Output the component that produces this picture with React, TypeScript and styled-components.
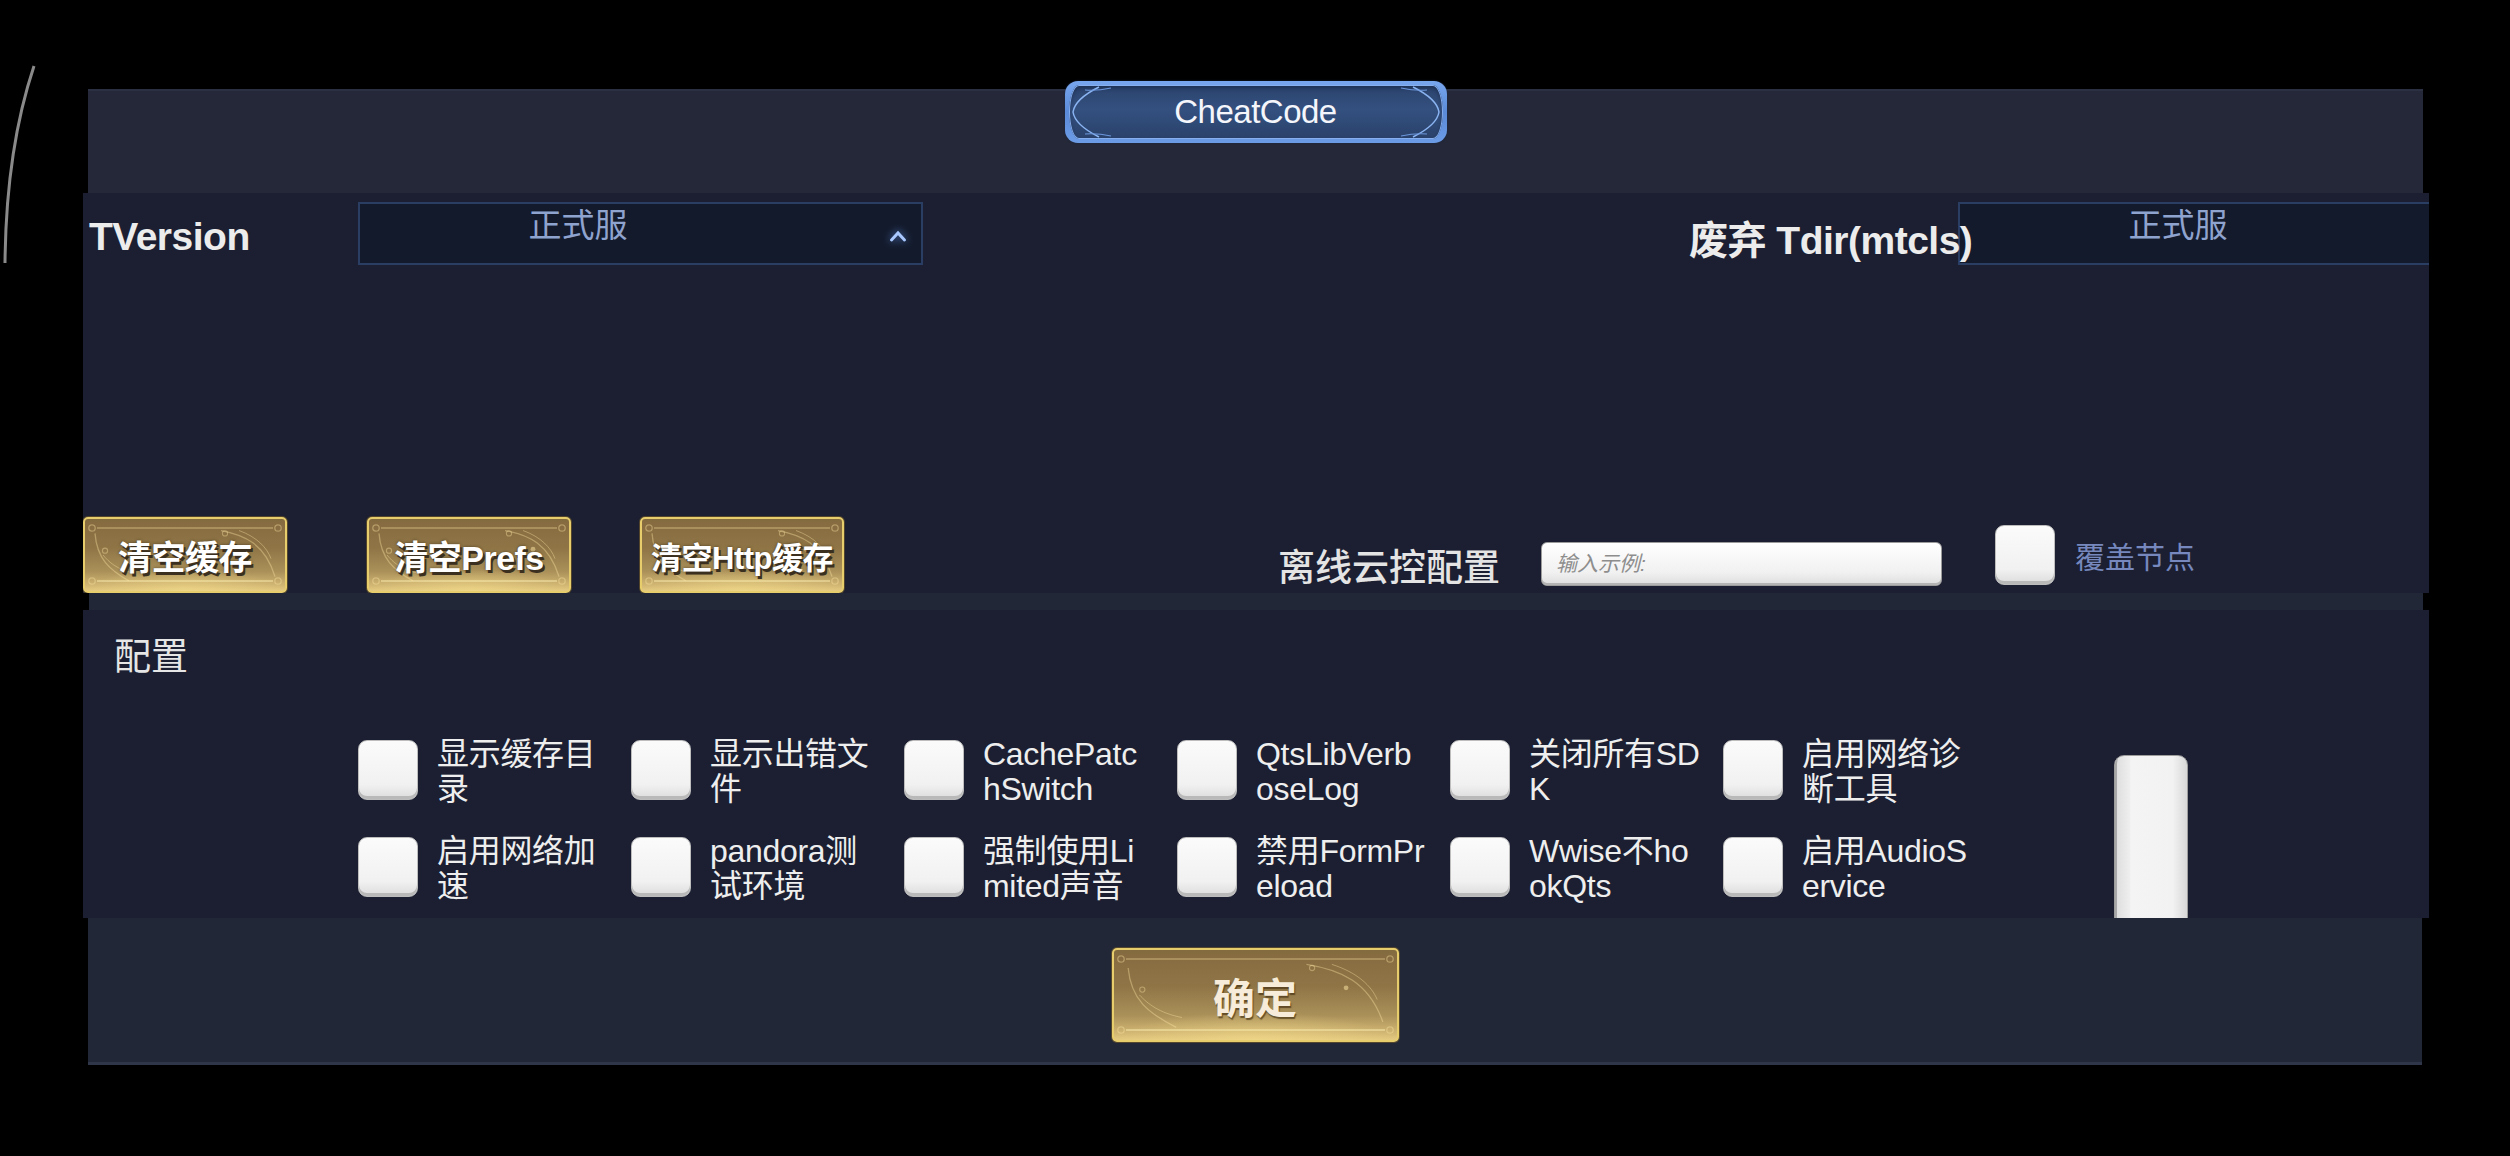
import React from "react";
import styled, { createGlobalStyle } from "styled-components";

const GlobalStyle = createGlobalStyle`
  html, body {
    margin: 0;
    padding: 0;
    background: #000;
  }
  body {
    font-family: "Liberation Sans", "Noto Sans CJK SC", sans-serif;
  }
  * {
    box-sizing: border-box;
  }
`;

const CJK = `"Liberation Sans", "Noto Sans CJK SC", sans-serif`;

const Screen = styled.div`
  position: relative;
  width: 2510px;
  height: 1156px;
  padding: 89px 0 0 83px;
  background: #000;
  overflow: hidden;
  font-family: ${CJK};
`;

const EdgeArc = styled.svg`
  position: absolute;
  left: 0;
  top: 60px;
`;

const Frame = styled.div`
  display: flex;
  flex-direction: column;
  width: 2346px;
`;

const Header = styled.div`
  display: flex;
  justify-content: center;
  align-items: flex-start;
  height: 104px;
  margin: 0 6px 0 5px;
  background: #242838;
  border-top: 2px solid #2b3042;
`;

const TitleFrame = styled.div`
  position: relative;
  width: 382px;
  height: 62px;
  margin-top: -10px;
  padding: 4px;
  border-radius: 13px;
  background: linear-gradient(180deg, #78a6ee 0%, #5b8bd8 50%, #6c9ce6 100%);
  box-shadow: 0 0 2px #1b2a48;
`;

const TitlePill = styled.div`
  position: relative;
  display: flex;
  align-items: center;
  justify-content: center;
  height: 100%;
  border-radius: 10px / 50%;
  background: linear-gradient(180deg, #2b436d 0%, #34507f 45%, #2f4a76 70%, #2a416a 100%);
  box-shadow: inset 0 0 0 1px #86aff0, inset 0 3px 4px rgba(10, 20, 45, 0.45);
  color: #f4f6fb;
  font-size: 33px;
  letter-spacing: -0.5px;
`;

const PillOrnament = styled.svg`
  position: absolute;
  inset: 0;
  pointer-events: none;
`;

const TopSection = styled.div`
  display: flex;
  flex-direction: column;
  justify-content: space-between;
  height: 400px;
  padding-top: 9px;
  background: #1b1f31;
  overflow: hidden;
`;

const SelectRow = styled.div`
  display: flex;
  align-items: center;
  height: 63px;
  padding-left: 6px;
`;

const FieldLabel = styled.div<{ $offset?: number }>`
  position: relative;
  z-index: 1;
  flex-shrink: 0;
  width: 269px;
  margin-left: ${({ $offset = 0 }) => `${$offset}px`};
  margin-top: 6px;
  color: #ececec;
  font-size: 39px;
  font-weight: 700;
  white-space: nowrap;
  letter-spacing: -0.5px;
`;

const Dropdown = styled.div`
  display: flex;
  align-items: flex-start;
  flex-shrink: 0;
  width: 565px;
  height: 63px;
  background: #131a2c;
  border: 2px solid #2a3d62;
`;

const DropText = styled.div`
  width: 436px;
  padding-top: 2px;
  text-align: center;
  color: #8fa3cf;
  font-size: 33px;
  line-height: 40px;
`;

const Chevron = styled.svg`
  align-self: center;
  margin: 4px 14px 0 auto;
  filter: drop-shadow(0 0 4px rgba(110, 160, 255, 0.8));
`;

const ActionRow = styled.div`
  display: flex;
  align-items: center;
  height: 76px;
`;

const GoldButton = styled.button<{ $w: number; $h: number; $size: number; $gap?: number }>`
  position: relative;
  display: flex;
  align-items: center;
  justify-content: center;
  flex-shrink: 0;
  width: ${({ $w }) => `${$w}px`};
  height: ${({ $h }) => `${$h}px`};
  margin: 0 0 0 ${({ $gap = 0 }) => `${$gap}px`};
  padding: 0;
  border: 2px solid #e8cd6c;
  border-radius: 5px;
  background:
    radial-gradient(ellipse 70% 45% at 50% 100%, rgba(245, 222, 140, 0.55), transparent 70%),
    linear-gradient(180deg, #846a3f 0%, #8f7546 40%, #a98f58 72%, #d1b673 92%, #e4ca80 100%);
  box-shadow: 0 0 0 1px rgba(120, 95, 40, 0.6);
  color: #ffffff;
  font-family: ${CJK};
  font-size: ${({ $size }) => `${$size}px`};
  font-weight: 700;
  text-shadow: 2px 3px 0 #3b3020, 0 0 3px rgba(40, 30, 15, 0.6);
  cursor: pointer;
`;

const ConfirmLabel = styled.span`
  position: relative;
  color: #f6ecd9;
  font-weight: 700;
  text-shadow: 1px 2px 1px rgba(70, 50, 20, 0.7);
`;

const ButtonLabel = styled.span`
  position: relative;
  letter-spacing: -0.5px;
`;

const Ornament = styled.svg`
  position: absolute;
  inset: 0;
  pointer-events: none;
`;

const OfflineLabel = styled.div`
  flex-shrink: 0;
  width: 263px;
  margin: 20px 0 0 434px;
  color: #e4e4e4;
  font-size: 37px;
  font-weight: 500;
  white-space: nowrap;
`;

const TextField = styled.input`
  flex-shrink: 0;
  width: 401px;
  height: 44px;
  margin-top: 18px;
  padding: 0 14px;
  border: 1px solid #9b9b9b;
  border-radius: 6px;
  background: linear-gradient(180deg, #ffffff 0%, #f1f1f1 70%, #dedede 100%);
  box-shadow: inset 0 -2px 0 #b4b4b4;
  font-family: ${CJK};
  font-size: 21px;
  font-style: italic;
  outline: none;

  &::placeholder {
    color: #8d8d8d;
  }
`;

const Tick = styled.div<{ $gap?: number }>`
  flex-shrink: 0;
  width: 60px;
  height: 60px;
  margin-left: ${({ $gap = 0 }) => `${$gap}px`};
  border: 1px solid #bdbdbd;
  border-radius: 9px;
  background: linear-gradient(180deg, #fbfbfb 0%, #f1f1f1 75%, #dcdcdc 100%);
  box-shadow: inset 0 -3px 0 #b9b9b9;
`;

const OverrideLabel = styled.div`
  margin: 0 0 0 20px;
  color: #7688bd;
  font-size: 30px;
  white-space: nowrap;
`;

const Strip = styled.div`
  height: 17px;
  margin: 0 6px;
  background: #222738;
`;

const ConfigSection = styled.div`
  display: flex;
  flex-direction: column;
  height: 308px;
  padding: 28px 0 0 31px;
  background: #1b1f31;
  overflow: hidden;
`;

const SectionTitle = styled.div`
  color: #e6e6e6;
  font-size: 37px;
  line-height: 40px;
`;

const OptionsArea = styled.div`
  display: flex;
  align-items: flex-start;
  margin: 62px 0 0 244px;
`;

const OptionGrid = styled.div`
  display: grid;
  grid-template-columns: repeat(6, 273px);
  grid-auto-rows: 60px;
  row-gap: 37px;
`;

const Option = styled.div`
  display: flex;
  align-items: flex-start;
`;

const OptionText = styled.div`
  margin: -3px 0 0 19px;
  color: #eeeeee;
  font-size: 32px;
  line-height: 35px;
  white-space: nowrap;
  letter-spacing: -0.3px;
`;

const Scrollbar = styled.div`
  width: 74px;
  height: 220px;
  margin: 15px 0 0 118px;
  border: 1px solid #9d9d9d;
  border-radius: 10px 10px 0 0;
  background: linear-gradient(90deg, #dcdcdc 0%, #eeeeee 20%, #f4f4f4 22%, #f2f2f2 80%, #d8d8d8 100%);
  box-shadow: inset 15px 0 0 -13px #a8a8a8;
`;

const Footer = styled.div`
  display: flex;
  justify-content: center;
  height: 147px;
  margin: 0 7px 0 5px;
  padding-top: 30px;
  background: #222737;
  border-bottom: 3px solid #30364a;
`;

const options: string[][] = [
  ["显示缓存目", "录"],
  ["显示出错文", "件"],
  ["CachePatc", "hSwitch"],
  ["QtsLibVerb", "oseLog"],
  ["关闭所有SD", "K"],
  ["启用网络诊", "断工具"],
  ["启用网络加", "速"],
  ["pandora测", "试环境"],
  ["强制使用Li", "mited声音"],
  ["禁用FormPr", "eload"],
  ["Wwise不ho", "okQts"],
  ["启用AudioS", "ervice"],
];

const GoldOrnament = ({ w, h }: { w: number; h: number }) => {
  const line = "rgba(255, 232, 165, 0.38)";
  return (
    <Ornament width={w} height={h} viewBox={`0 0 ${w} ${h}`}>
      <line x1={12} y1={9} x2={w - 12} y2={9} stroke={line} strokeWidth={1.5} />
      <line x1={12} y1={h - 10} x2={w - 12} y2={h - 10} stroke="rgba(255, 240, 180, 0.6)" strokeWidth={1.5} />
      {[
        [7, 9],
        [w - 7, 9],
        [7, h - 10],
        [w - 7, h - 10],
      ].map(([cx, cy], i) => (
        <circle key={i} cx={cx} cy={cy} r={3.2} fill="none" stroke={line} strokeWidth={1.3} />
      ))}
      <path
        d={`M ${w * 0.05} ${h * 0.2} C ${w * 0.06} ${h * 0.55}, ${w * 0.12} ${h * 0.7}, ${w * 0.22} ${h * 0.86}`}
        fill="none"
        stroke={line}
        strokeWidth={1.3}
      />
      <path
        d={`M ${w * 0.09} ${h * 0.5} C ${w * 0.12} ${h * 0.6}, ${w * 0.16} ${h * 0.7}, ${w * 0.24} ${h * 0.75}`}
        fill="none"
        stroke={line}
        strokeWidth={1}
      />
      <circle cx={w * 0.1} cy={h * 0.44} r={2.6} fill="none" stroke={line} strokeWidth={1.1} />
      <path
        d={`M ${w * 0.68} ${h * 0.16} C ${w * 0.8} ${h * 0.22}, ${w * 0.9} ${h * 0.35}, ${w * 0.95} ${h * 0.8}`}
        fill="none"
        stroke={line}
        strokeWidth={1.3}
      />
      <path
        d={`M ${w * 0.77} ${h * 0.16} C ${w * 0.86} ${h * 0.25}, ${w * 0.91} ${h * 0.4}, ${w * 0.93} ${h * 0.55}`}
        fill="none"
        stroke={line}
        strokeWidth={1}
      />
      <circle cx={w * 0.7} cy={h * 0.2} r={2.6} fill="none" stroke={line} strokeWidth={1.1} />
      <circle cx={w * 0.82} cy={h * 0.42} r={2.4} fill="rgba(255, 232, 165, 0.5)" />
    </Ornament>
  );
};

const App = () => {
  return (
    <Screen>
      <GlobalStyle />
      <EdgeArc width="40" height="220" viewBox="0 0 40 220">
        <path d="M 34 6 Q 6 90 5 203" fill="none" stroke="#8a8a8a" strokeWidth="3" />
      </EdgeArc>

      <Frame>
        <Header>
          <TitleFrame>
            <TitlePill>
              <PillOrnament width="374" height="54" viewBox="0 0 374 54">
                <path d="M 30 2 Q 6 14 4 27 Q 6 40 30 52" fill="none" stroke="#8ab4f2" strokeWidth="1.5" />
                <path d="M 344 2 Q 368 14 370 27 Q 368 40 344 52" fill="none" stroke="#8ab4f2" strokeWidth="1.5" />
                <path d="M 16 5 Q 28 6 42 3" fill="none" stroke="#6c97dd" strokeWidth="1.2" />
                <path d="M 358 5 Q 346 6 332 3" fill="none" stroke="#6c97dd" strokeWidth="1.2" />
                <path d="M 16 49 Q 28 48 42 51" fill="none" stroke="#6c97dd" strokeWidth="1.2" />
                <path d="M 358 49 Q 346 48 332 51" fill="none" stroke="#6c97dd" strokeWidth="1.2" />
              </PillOrnament>
              CheatCode
            </TitlePill>
          </TitleFrame>
        </Header>

        <TopSection>
          <SelectRow>
            <FieldLabel>TVersion</FieldLabel>
            <Dropdown>
              <DropText>正式服</DropText>
              <Chevron width="18" height="14" viewBox="0 0 18 14">
                <path d="M 2.5 11 L 9 4 L 15.5 11" fill="none" stroke="#a9c8ff" strokeWidth="3" strokeLinecap="round" />
              </Chevron>
            </Dropdown>
            <FieldLabel $offset={766}>废弃 Tdir(mtcls)</FieldLabel>
            <Dropdown>
              <DropText>正式服</DropText>
            </Dropdown>
          </SelectRow>

          <ActionRow>
            <GoldButton $w={204} $h={76} $size={34}>
              <GoldOrnament w={200} h={72} />
              <ButtonLabel>清空缓存</ButtonLabel>
            </GoldButton>
            <GoldButton $w={204} $h={76} $size={34} $gap={80}>
              <GoldOrnament w={200} h={72} />
              <ButtonLabel>清空Prefs</ButtonLabel>
            </GoldButton>
            <GoldButton $w={204} $h={76} $size={31} $gap={69}>
              <GoldOrnament w={200} h={72} />
              <ButtonLabel>清空Http缓存</ButtonLabel>
            </GoldButton>
            <OfflineLabel>离线云控配置</OfflineLabel>
            <TextField placeholder="输入示例:" />
            <Tick $gap={53} />
            <OverrideLabel>覆盖节点</OverrideLabel>
          </ActionRow>
        </TopSection>

        <Strip />

        <ConfigSection>
          <SectionTitle>配置</SectionTitle>
          <OptionsArea>
            <OptionGrid>
              {options.map((lines) => (
                <Option key={lines.join("")}>
                  <Tick />
                  <OptionText>
                    {lines.map((text) => (
                      <div key={text}>{text}</div>
                    ))}
                  </OptionText>
                </Option>
              ))}
            </OptionGrid>
            <Scrollbar />
          </OptionsArea>
        </ConfigSection>

        <Footer>
          <GoldButton $w={287} $h={94} $size={42}>
            <GoldOrnament w={283} h={90} />
            <ConfirmLabel>确定</ConfirmLabel>
          </GoldButton>
        </Footer>
      </Frame>
    </Screen>
  );
};

export default App;
